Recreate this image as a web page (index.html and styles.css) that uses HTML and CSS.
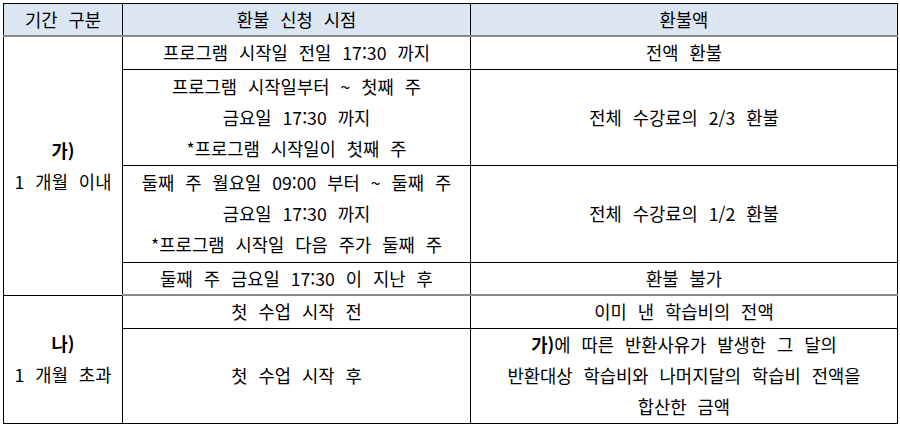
FILE: index.html
```html
<!DOCTYPE html>
<html lang="ko">
<head>
<meta charset="utf-8">
<link rel="stylesheet" href="styles.css">
</head>
<body>
<table class="refund">
  <colgroup>
    <col class="c1">
    <col class="c2">
    <col class="c3">
  </colgroup>
  <thead>
    <tr class="head">
      <th>기간 구분</th>
      <th>환불 신청 시점</th>
      <th>환불액</th>
    </tr>
  </thead>
  <tbody>
    <tr class="r1">
      <td rowspan="4" class="period"><b>가)</b><br>1 개월 이내</td>
      <td>프로그램 시작일 전일 17:30 까지</td>
      <td>전액 환불</td>
    </tr>
    <tr class="r3">
      <td>프로그램 시작일부터 ~ 첫째 주<br>금요일 17:30 까지<br>*프로그램 시작일이 첫째 주</td>
      <td>전체 수강료의 2/3 환불</td>
    </tr>
    <tr class="r3b">
      <td>둘째 주 월요일 09:00 부터 ~ 둘째 주<br>금요일 17:30 까지<br>*프로그램 시작일 다음 주가 둘째 주</td>
      <td>전체 수강료의 1/2 환불</td>
    </tr>
    <tr class="r1 sep">
      <td>둘째 주 금요일 17:30 이 지난 후</td>
      <td>환불 불가</td>
    </tr>
    <tr class="r1">
      <td rowspan="2" class="period"><b>나)</b><br>1 개월 초과</td>
      <td>첫 수업 시작 전</td>
      <td>이미 낸 학습비의 전액</td>
    </tr>
    <tr class="r3c">
      <td>첫 수업 시작 후</td>
      <td><b>가)</b>에 따른 반환사유가 발생한 그 달의<br>반환대상 학습비와 나머지달의 학습비 전액을<br>합산한 금액</td>
    </tr>
  </tbody>
</table>
</body>
</html>
```

FILE: styles.css
```css
html, body {
  margin: 0;
  padding: 0;
  background: #ffffff;
}

.refund {
  margin: 3px 0 0 3px;
  width: 894px;
  table-layout: fixed;
  border-collapse: collapse;
  font-family: "Noto Sans CJK KR", "Noto Sans", sans-serif;
  font-size: 17.7px;
  word-spacing: 6px;
  color: #000000;
}

.c1 { width: 119px; }
.c2 { width: 348px; }
.c3 { width: 427px; }

.refund th,
.refund td {
  border: 1px solid #000000;
  padding: 0;
  text-align: center;
  vertical-align: middle;
  line-height: 31px;
  font-weight: normal;
}

.refund th {
  background: #dce6f2;
  border-bottom: 2px solid #8a8a8a;
}

.refund b {
  font-weight: bold;
}

.head { height: 32px; }
.r1 { height: 33px; }
.r3 { height: 96px; }
.r3b { height: 97px; }
.r3c { height: 95px; }

.sep td {
  border-bottom: 2px solid #8a8a8a;
}
```
